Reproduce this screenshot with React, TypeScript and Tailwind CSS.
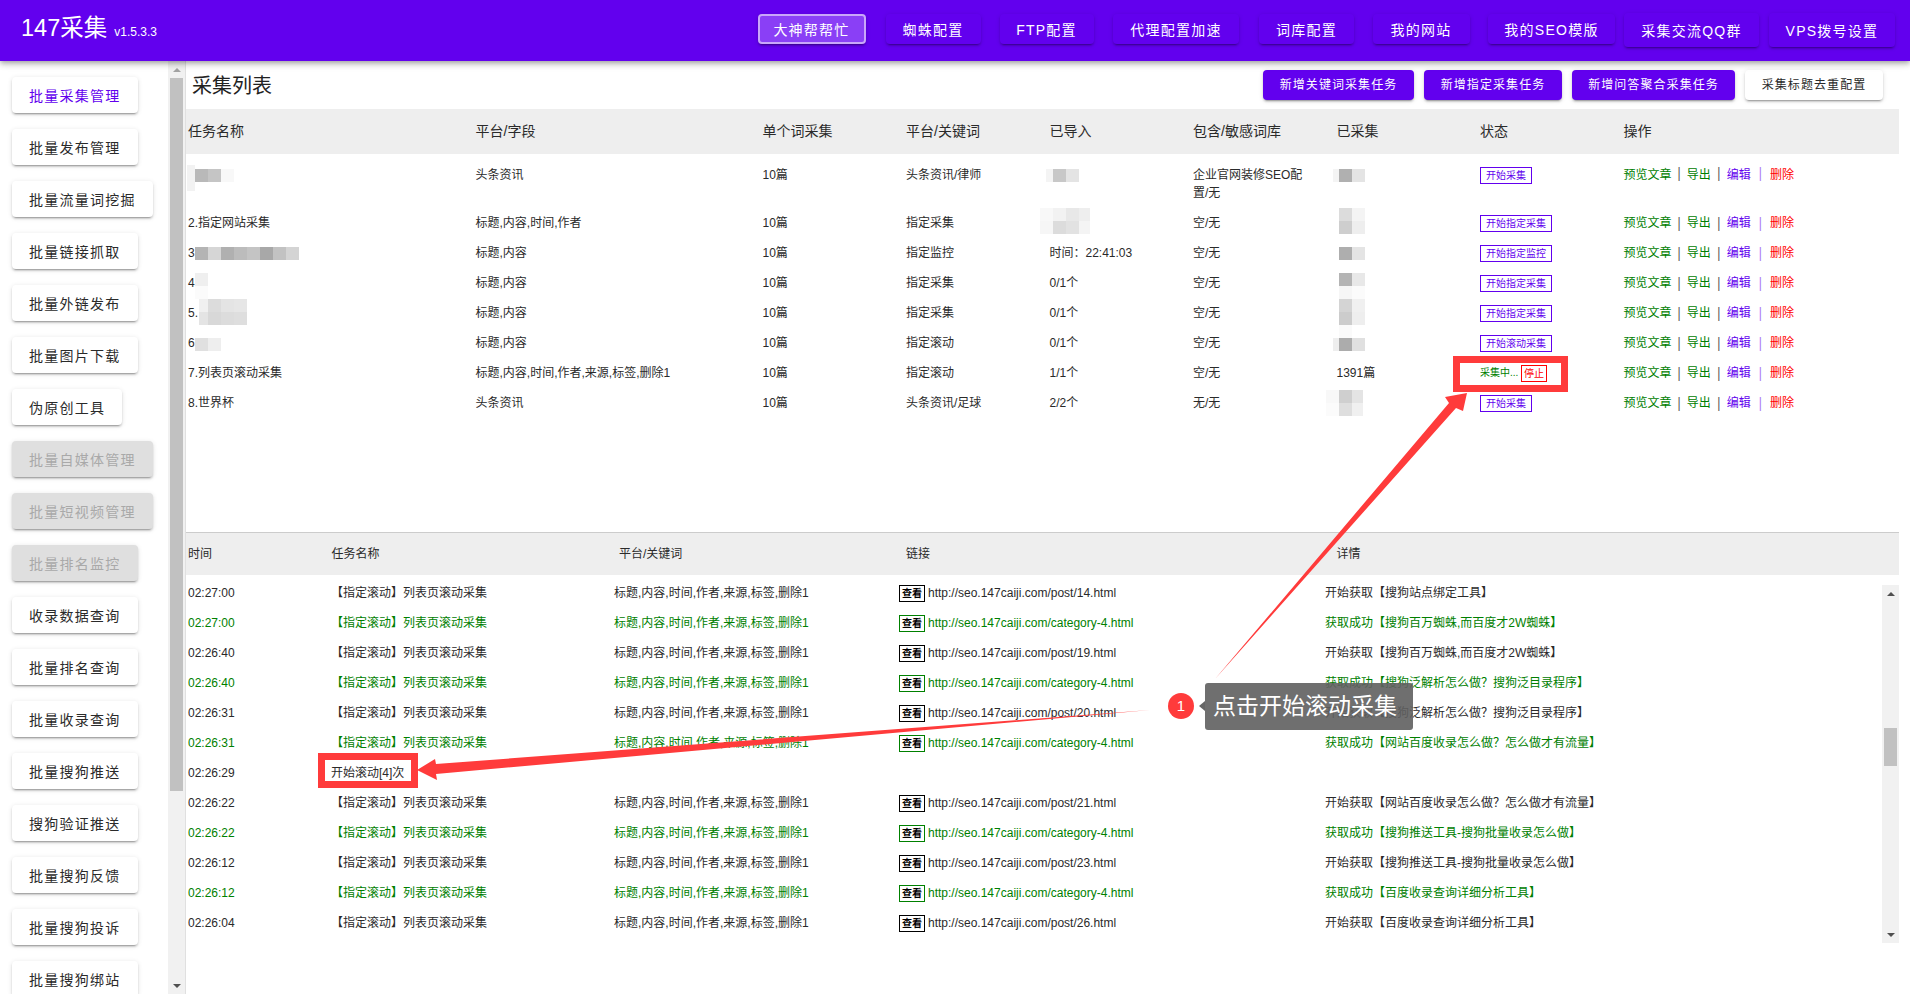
const raised =
  "shadow-[0_3px_1px_-2px_rgba(0,0,0,0.2),0_2px_2px_0_rgba(0,0,0,0.14),0_1px_5px_0_rgba(0,0,0,0.12)]";

const navItems = [
  { label: "大神帮帮忙", cls: "w-[108px] h-[30px] bg-[#8a3ff6] border-2 border-[#c9a6fa]" },
  { label: "蜘蛛配置", cls: "w-[95px] h-[30px] ml-[20px] bg-[#6200ee]" },
  { label: "FTP配置", cls: "w-[94px] h-[30px] ml-[19px] bg-[#6200ee]" },
  { label: "代理配置加速", cls: "w-[126px] h-[30px] ml-[19.5px] bg-[#6200ee]" },
  { label: "词库配置", cls: "w-[95px] h-[30px] ml-[20px] bg-[#6200ee]" },
  { label: "我的网站", cls: "w-[97px] h-[30px] ml-[18.5px] bg-[#6200ee]" },
  { label: "我的SEO模版", cls: "w-[127px] h-[30px] ml-[18.5px] bg-[#6200ee]" },
  { label: "采集交流QQ群", cls: "w-[135px] h-[34px] mt-[2px] ml-[9px] bg-[#6200ee]" },
  { label: "VPS拨号设置", cls: "w-[126px] h-[34px] mt-[2px] ml-[10px] bg-[#6200ee]" },
];

const sideItems = [
  { label: "批量采集管理", kind: "active" },
  { label: "批量发布管理" },
  { label: "批量流量词挖掘" },
  { label: "批量链接抓取" },
  { label: "批量外链发布" },
  { label: "批量图片下载" },
  { label: "伪原创工具" },
  { label: "批量自媒体管理", kind: "off" },
  { label: "批量短视频管理", kind: "off" },
  { label: "批量排名监控", kind: "off" },
  { label: "收录数据查询" },
  { label: "批量排名查询" },
  { label: "批量收录查询" },
  { label: "批量搜狗推送" },
  { label: "搜狗验证推送" },
  { label: "批量搜狗反馈" },
  { label: "批量搜狗投诉" },
  { label: "批量搜狗绑站" },
];

const topButtons = [
  { label: "新增关键词采集任务", cls: "w-[151px] bg-[#6200ee] text-white" },
  { label: "新增指定采集任务", cls: "w-[138px] bg-[#6200ee] text-white" },
  { label: "新增问答聚合采集任务", cls: "w-[163px] bg-[#6200ee] text-white" },
  { label: "采集标题去重配置", cls: "w-[138px] bg-white text-[#2a2a2a]" },
];

const tasks = [
  { name: "", field: "头条资讯", kw: "头条资讯/律师", imported: "", lib: "企业官网装修SEO配置/无", got: "", status: "开始采集" },
  { name: "2.指定网站采集", field: "标题,内容,时间,作者", kw: "指定采集", imported: "", lib: "空/无", got: "", status: "开始指定采集" },
  { name: "3", field: "标题,内容", kw: "指定监控", imported: "时间：22:41:03", lib: "空/无", got: "", status: "开始指定监控" },
  { name: "4", field: "标题,内容", kw: "指定采集", imported: "0/1个", lib: "空/无", got: "", status: "开始指定采集" },
  { name: "5.", field: "标题,内容", kw: "指定采集", imported: "0/1个", lib: "空/无", got: "", status: "开始指定采集" },
  { name: "6", field: "标题,内容", kw: "指定滚动", imported: "0/1个", lib: "空/无", got: "", status: "开始滚动采集" },
  { name: "7.列表页滚动采集", field: "标题,内容,时间,作者,来源,标签,删除1", kw: "指定滚动", imported: "1/1个", lib: "空/无", got: "1391篇", status: "" },
  { name: "8.世界杯", field: "头条资讯", kw: "头条资讯/足球", imported: "2/2个", lib: "无/无", got: "", status: "开始采集" },
];

const cat = "http://seo.147caiji.com/category-4.html";
const logs = [
  { time: "02:27:00", url: "http://seo.147caiji.com/post/14.html", detail: "开始获取【搜狗站点绑定工具】" },
  { time: "02:27:00", url: cat, detail: "获取成功【搜狗百万蜘蛛,而百度才2W蜘蛛】", ok: true },
  { time: "02:26:40", url: "http://seo.147caiji.com/post/19.html", detail: "开始获取【搜狗百万蜘蛛,而百度才2W蜘蛛】" },
  { time: "02:26:40", url: cat, detail: "获取成功【搜狗泛解析怎么做？搜狗泛目录程序】", ok: true },
  { time: "02:26:31", url: "http://seo.147caiji.com/post/20.html", detail: "开始获取【搜狗泛解析怎么做？搜狗泛目录程序】" },
  { time: "02:26:31", url: cat, detail: "获取成功【网站百度收录怎么做？怎么做才有流量】", ok: true },
  { time: "02:26:29", note: "开始滚动[4]次" },
  { time: "02:26:22", url: "http://seo.147caiji.com/post/21.html", detail: "开始获取【网站百度收录怎么做？怎么做才有流量】" },
  { time: "02:26:22", url: cat, detail: "获取成功【搜狗推送工具-搜狗批量收录怎么做】", ok: true },
  { time: "02:26:12", url: "http://seo.147caiji.com/post/23.html", detail: "开始获取【搜狗推送工具-搜狗批量收录怎么做】" },
  { time: "02:26:12", url: cat, detail: "获取成功【百度收录查询详细分析工具】", ok: true },
  { time: "02:26:04", url: "http://seo.147caiji.com/post/26.html", detail: "开始获取【百度收录查询详细分析工具】" },
];

// x, y, w, h, colour of the mosaic cells that hide names in the screenshot
const mosaic: [number, number, number, number, string][] = [
  [187, 165, 8, 26, "#f2f2f2"], [195, 169, 13, 13, "#b9b9b9"], [208, 169, 13, 13, "#c5c5c5"], [221, 169, 13, 13, "#f8f8f8"],
  [195, 247, 13, 13, "#b4b4b4"], [208, 247, 13, 13, "#d6d6d6"], [221, 247, 13, 13, "#b0b0b0"], [234, 247, 13, 13, "#bcbcbc"],
  [247, 247, 13, 13, "#c4c4c4"], [260, 247, 13, 13, "#a8a8a8"], [273, 247, 13, 13, "#c2c2c2"], [286, 247, 13, 13, "#d4d4d4"],
  [195, 273, 13, 13, "#efefef"], [195, 286, 13, 13, "#fbfbfb"],
  [199, 299, 9, 13, "#f0f0f0"], [208, 299, 13, 13, "#dcdcdc"], [221, 299, 13, 13, "#e4e4e4"], [234, 299, 13, 13, "#e6e6e6"],
  [199, 312, 9, 13, "#e4e4e4"], [208, 312, 13, 13, "#d8d8d8"], [221, 312, 13, 13, "#dcdcdc"], [234, 312, 13, 13, "#dedede"],
  [195, 338, 13, 13, "#e0e0e0"], [208, 338, 13, 13, "#eeeeee"],
  [1046, 169, 7, 13, "#f4f4f4"], [1053, 169, 13, 13, "#c8c8c8"], [1066, 169, 13, 13, "#e4e4e4"],
  [1040, 208, 13, 13, "#f8f8f8"], [1053, 208, 13, 13, "#f2f2f2"], [1066, 208, 13, 13, "#e8e8e8"], [1079, 208, 11, 13, "#eeeeee"],
  [1040, 221, 13, 13, "#f6f6f6"], [1053, 221, 13, 13, "#dcdcdc"], [1066, 221, 13, 13, "#e2e2e2"], [1079, 221, 11, 13, "#f4f4f4"],
  [1333, 169, 6, 13, "#f4f4f4"], [1339, 169, 13, 13, "#b0b0b0"], [1352, 169, 13, 13, "#e4e4e4"],
  [1339, 208, 13, 13, "#dcdcdc"], [1352, 208, 13, 13, "#f4f4f4"], [1339, 221, 13, 13, "#cecece"], [1352, 221, 13, 13, "#eeeeee"],
  [1339, 247, 13, 13, "#aeaeae"], [1352, 247, 13, 13, "#e4e4e4"],
  [1339, 273, 13, 13, "#b4b4b4"], [1352, 273, 13, 13, "#e8e8e8"], [1339, 286, 13, 13, "#f6f6f6"], [1352, 286, 13, 13, "#fbfbfb"],
  [1339, 299, 13, 13, "#d4d4d4"], [1352, 299, 13, 13, "#f0f0f0"], [1339, 312, 13, 13, "#cccccc"], [1352, 312, 13, 13, "#eeeeee"],
  [1339, 325, 13, 13, "#fafafa"], [1333, 338, 6, 13, "#eeeeee"], [1339, 338, 13, 13, "#acacac"], [1352, 338, 13, 13, "#e0e0e0"],
  [1326, 390, 13, 13, "#f8f8f8"], [1339, 390, 13, 13, "#cfcfcf"], [1352, 390, 11, 13, "#e4e4e4"],
  [1326, 403, 13, 13, "#fbfbfb"], [1339, 403, 13, 13, "#dedede"], [1352, 403, 11, 13, "#f0f0f0"],
];

function Ops() {
  return (
    <div className="flex">
      <span className="text-[#008000]">预览文章</span>
      <span className="mx-[6px] text-[#555] scale-y-125">|</span>
      <span className="text-[#008000]">导出</span>
      <span className="mx-[6.5px] text-[#555] scale-y-125">|</span>
      <span className="text-[#6200ee]">编辑</span>
      <span className="mx-[8px] text-[#a878f5] scale-y-125">|</span>
      <span className="text-[#ff0000]">删除</span>
    </div>
  );
}

function StatusCell({ status }: { status: string }) {
  if (!status) {
    return (
      <div className="flex items-center text-[10px] h-[18px] text-[#008000]">
        <span className="w-[41px]">采集中...</span>
        <span className="border border-[#ff0000] text-[#ff0000] px-[2px] h-[17px] leading-[15px]">停止</span>
      </div>
    );
  }
  return (
    <span className="inline-block border border-[#6200ee] text-[#6200ee] text-[10px] px-[5px] h-[17px] leading-[15px] align-top mt-[1px]">
      {status}
    </span>
  );
}

function Sidebar() {
  return (
    <aside className="w-[186px] shrink-0 flex border-r border-[#e0e0e0] overflow-hidden">
      <div className="w-[168px] shrink-0 pl-[12px] pt-[16px] flex flex-col items-start gap-[16px]">
        {sideItems.map((item) => (
          <div
            key={item.label}
            className={`h-[36px] shrink-0 px-[17px] pt-[2px] rounded flex items-center text-[14px] tracking-[1.25px] ${raised} ${
              item.kind === "off"
                ? "bg-[#dfdfdf] text-[#a9a9a9]"
                : item.kind === "active"
                  ? "bg-white text-[#6200ee]"
                  : "bg-white text-[#2a2a2a]"
            }`}
          >
            {item.label}
          </div>
        ))}
      </div>
      {/* scrollbar */}
      <div className="w-[17px] shrink-0 bg-[#f1f1f1] flex flex-col items-center">
        <div className="h-[17px] flex items-center justify-center">
          <div className="w-0 h-0 border-x-[4px] border-b-[4px] border-x-transparent border-b-[#a3a3a3]" />
        </div>
        <div className="w-[13px] h-[713px] bg-[#c1c1c1]" />
        <div className="flex-1" />
        <div className="h-[17px] flex items-center justify-center">
          <div className="w-0 h-0 border-x-[4px] border-t-[4px] border-x-transparent border-t-[#505050]" />
        </div>
      </div>
    </aside>
  );
}

function TaskPanel() {
  return (
    <section className="h-[471px]">
      <div className="h-[48px] pt-[9px] pl-[6px] pr-[16px]">
        <div className="h-[30px] flex items-center justify-between">
          <h1 className="text-[20px] text-[#222] mt-[2px]">采集列表</h1>
          <div className="flex gap-[10px]">
            {topButtons.map((b) => (
              <button key={b.label} className={`${b.cls} h-[30px] rounded text-[12px] tracking-[1.07px] ${raised}`}>
                {b.label}
              </button>
            ))}
          </div>
        </div>
      </div>
      <div className="h-[45px] bg-[#eeeeee] pl-[2px] grid grid-cols-[287.5px_287px_143.5px_143.5px_143.5px_143.5px_143.5px_143.5px_1fr] items-center text-[14px] text-[#2a2a2a]">
        {["任务名称", "平台/字段", "单个词采集", "平台/关键词", "已导入", "包含/敏感词库", "已采集", "状态", "操作"].map((h) => (
          <div key={h}>{h}</div>
        ))}
      </div>
      <div className="pt-[6px] text-[12px] leading-[18px] text-[#2a2a2a]">
        {tasks.map((t, i) => (
          <div
            key={i}
            className="pl-[2px] py-[6px] grid grid-cols-[287.5px_287px_143.5px_143.5px_143.5px_143.5px_143.5px_143.5px_1fr]"
          >
            <div>{t.name}</div>
            <div>{t.field}</div>
            <div>10篇</div>
            <div>{t.kw}</div>
            <div>{t.imported}</div>
            <div className="pr-[22px] break-all">{t.lib}</div>
            <div>{t.got}</div>
            <div>
              <StatusCell status={t.status} />
            </div>
            <Ops />
          </div>
        ))}
      </div>
    </section>
  );
}

function LogPanel() {
  return (
    <section className="border-t border-[#cccccc]">
      <div className="h-[42px] bg-[#eeeeee] pl-[2px] grid grid-cols-[143.5px_287.5px_287px_430.5px_1fr] items-center text-[12px] text-[#2a2a2a]">
        {["时间", "任务名称", "平台/关键词", "链接", "详情"].map((h) => (
          <div key={h}>{h}</div>
        ))}
      </div>
      <div className="flex">
        <div className="w-[1696px] pt-[3px] text-[12px] leading-[18px]">
          {logs.map((l, i) => (
            <div
              key={i}
              className={`pl-[2px] py-[6px] grid grid-cols-[143px_283px_285px_426px_1fr] ${l.ok ? "text-[#008000]" : "text-[#2a2a2a]"}`}
            >
              <div>{l.time}</div>
              {l.note ? (
                <div>{l.note}</div>
              ) : (
                <>
                  <div>【指定滚动】列表页滚动采集</div>
                  <div>标题,内容,时间,作者,来源,标签,删除1</div>
                  <div className="flex items-center">
                    <span className={`border ${l.ok ? "border-[#008000]" : "border-[#000]"} text-[10px] text-black font-bold px-[2px] h-[17px] leading-[15px] mr-[3px] mt-[1px]`}>
                      查看
                    </span>
                    {l.url}
                  </div>
                  <div>{l.detail}</div>
                </>
              )}
            </div>
          ))}
        </div>
        {/* scrollbar */}
        <div className="w-[17px] h-[358px] mt-[10px] bg-[#f1f1f1] flex flex-col items-center">
          <div className="h-[17px] flex items-center justify-center">
            <div className="w-0 h-0 border-x-[4px] border-b-[4px] border-x-transparent border-b-[#505050]" />
          </div>
          <div className="w-[13px] h-[38px] mt-[126px] bg-[#c1c1c1]" />
          <div className="flex-1" />
          <div className="h-[17px] flex items-center justify-center">
            <div className="w-0 h-0 border-x-[4px] border-t-[4px] border-x-transparent border-t-[#505050]" />
          </div>
        </div>
      </div>
    </section>
  );
}

function Annotations() {
  return (
    <>
      <svg className="absolute left-0 top-0 pointer-events-none" width="1910" height="994">
        {mosaic.map(([x, y, w, h, c], i) => (
          <rect key={i} x={x} y={y} width={w} height={h} fill={c} />
        ))}
        <polygon points="1215,679 1449,403 1445,397 1467,393 1463,411 1456,408" fill="#ff3b3b" />
        <polygon points="1150,710 436,774 437,780 417,770 435,759 436,764" fill="#ff3b3b" />
        <polygon points="1199,706 1205,701 1205,711" fill="#666666" />
      </svg>
      {/* highlight boxes */}
      <div className="absolute left-[1453px] top-[356px] w-[115px] h-[36px] border-[7px] border-[#ff3b3b]" />
      <div className="absolute left-[318px] top-[753px] w-[100px] h-[35px] border-[7px] border-[#ff3b3b]" />
      {/* step tip */}
      <div className="absolute left-[1168px] top-[693px] w-[26px] h-[26px] rounded-full bg-[#ff3b3b] text-white text-[15px] flex items-center justify-center">
        1
      </div>
      <div className="absolute left-[1205px] top-[683px] w-[208px] h-[47px] rounded-[3px] bg-[#5f5f5f]/90 text-white text-[23px] pl-[8px] flex items-center whitespace-nowrap">
        点击开始滚动采集
      </div>
    </>
  );
}

export default function App() {
  return (
    <div className="relative w-[1910px] h-[994px] overflow-hidden bg-white font-['Liberation_Sans','Noto_Sans_CJK_SC',sans-serif]">
      <header className="relative z-10 h-[61px] bg-[#6200ee] flex items-center pl-[21px] pr-[15px] shadow-[0_2px_4px_-1px_rgba(0,0,0,0.2),0_4px_5px_0_rgba(0,0,0,0.14),0_1px_10px_0_rgba(0,0,0,0.12)]">
        <div className="flex items-baseline text-white mt-[-3px]">
          <span className="text-[23.5px]">147采集</span>
          <span className="text-[12px] ml-[7px]">v1.5.3.3</span>
        </div>
        <nav className="ml-auto flex items-center mt-[-3px]">
          {navItems.map((n) => (
            <div key={n.label} className={`${n.cls} pt-[2px] rounded flex items-center justify-center text-white text-[14px] tracking-[1.25px] ${raised}`}>
              {n.label}
            </div>
          ))}
        </nav>
      </header>
      <div className="flex h-[933px]">
        <Sidebar />
        <main className="w-[1713px] shrink-0">
          <TaskPanel />
          <LogPanel />
        </main>
      </div>
      <Annotations />
    </div>
  );
}
